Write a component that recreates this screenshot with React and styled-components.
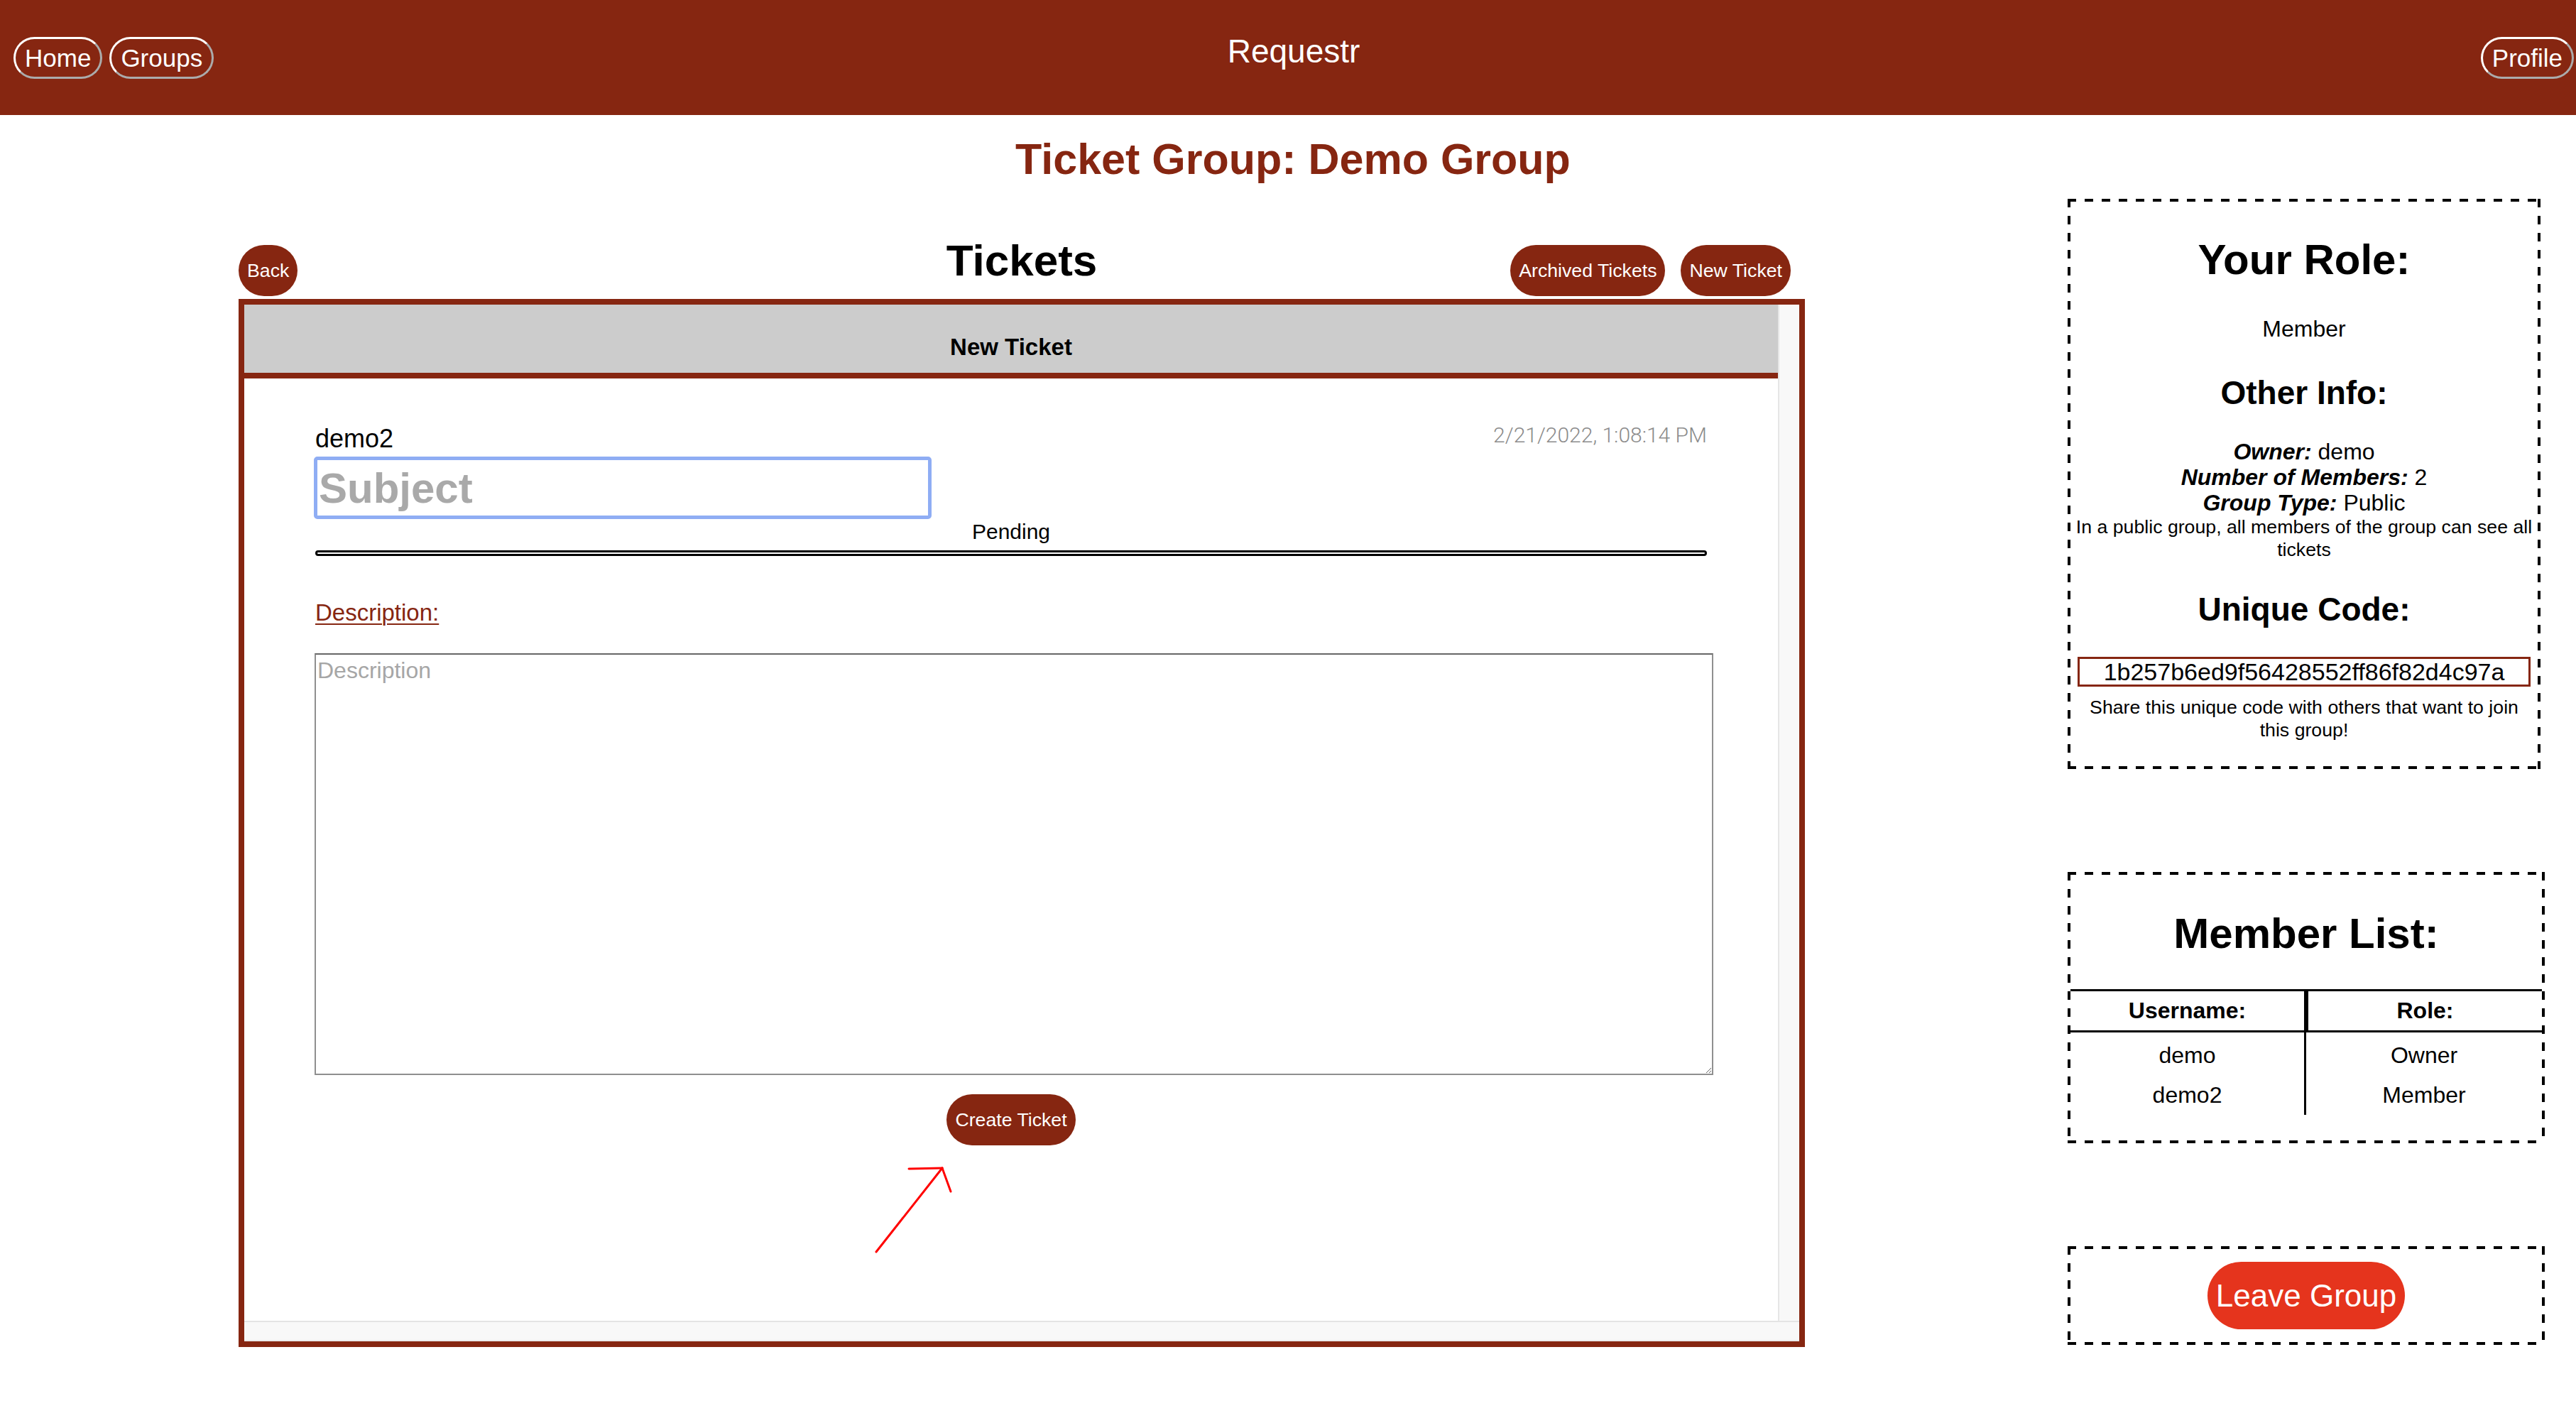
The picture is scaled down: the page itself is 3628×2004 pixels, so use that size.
import React from 'react';
import styled, { createGlobalStyle } from 'styled-components';

const BRAND = '#862611';
const SANS = '"Liberation Sans", Arial, Helvetica, sans-serif';

const GlobalStyle = createGlobalStyle`
  html, body {
    margin: 0;
    padding: 0;
    background: #fff;
  }
  body {
    font-family: ${SANS};
    color: #000;
  }
  * {
    box-sizing: border-box;
  }
`;

const Page = styled.div`
  position: relative;
  width: 3628px;
  height: 2004px;
  overflow: hidden;
`;

/* top bar */
const TopBar = styled.header`
  display: grid;
  grid-template-columns: 1fr auto 1fr;
  align-items: start;
  height: 162px;
  padding: 46px 3px 0 19px;
  background: ${BRAND};
`;

const NavGroup = styled.nav`
  display: flex;
  gap: 10px;
  margin-top: 6px;
  justify-self: ${(p) => (p.$end ? 'end' : 'start')};
`;

const NavButton = styled.button`
  height: 59px;
  padding: 0 13px;
  border: 3px outset #fff;
  border-radius: 30px;
  background: transparent;
  color: #fff;
  font-family: ${SANS};
  font-size: 35px;
  line-height: 1;
`;

const Brand = styled.div`
  color: #fff;
  font-size: 46px;
  line-height: 53px;
`;

const PageTitle = styled.h1`
  margin: 27px 0 20px;
  padding-left: 14px;
  text-align: center;
  color: ${BRAND};
  font-size: 61px;
  font-weight: 700;
  line-height: 71px;
`;

/* main area */
const Workspace = styled.main`
  display: flex;
  align-items: flex-start;
  padding-left: 336px;
`;

const TicketColumn = styled.section`
  width: 2206px;
  padding-top: 51px;
`;

const TicketsBar = styled.div`
  display: grid;
  grid-template-columns: 1fr auto 1fr;
  align-items: end;
  margin-bottom: 4px;
`;

const TicketsHeading = styled.h2`
  margin: 0 0 15px;
  font-size: 62px;
  font-weight: 700;
  line-height: 71px;
`;

const ActionGroup = styled.div`
  display: flex;
  gap: 22px;
  justify-self: ${(p) => (p.$end ? 'end' : 'start')};
  margin-right: ${(p) => (p.$end ? '20px' : '0')};
`;

const PillButton = styled.button`
  height: ${(p) => p.$h || 72}px;
  padding: 0 12px;
  border: none;
  border-radius: ${(p) => (p.$h || 72) / 2}px;
  background: ${(p) => p.$bg || BRAND};
  color: #fff;
  font-family: ${SANS};
  font-size: ${(p) => p.$size || 26.7}px;
  white-space: nowrap;
`;

// the ticket panel keeps its (empty) scrollbar tracks on the right and bottom
const Panel = styled.div`
  height: 1476px;
  display: grid;
  grid-template-columns: 1fr 30px;
  grid-template-rows: 1fr 29px;
  border: 8px solid ${BRAND};
  background: #fff;
`;

const Viewport = styled.div`
  overflow: hidden;
`;

const Track = styled.div`
  background: #f8f8f8;
  ${(p) =>
    p.$horizontal
      ? `grid-column: 1 / 3;
         border-top: 2px solid #e4e4e4;
         border-bottom: 2px solid #ebebeb;`
      : `border-left: 2px solid #e6e6e6;`}
`;

const FormHeader = styled.div`
  height: 104px;
  display: flex;
  align-items: flex-end;
  justify-content: center;
  padding-bottom: 17px;
  background: #ccc;
  border-bottom: 8px solid ${BRAND};
  font-size: 33px;
  font-weight: 700;
`;

const FormBody = styled.div`
  display: flex;
  flex-direction: column;
  padding: 64px 100px 0;
`;

const MetaRow = styled.div`
  display: flex;
  justify-content: space-between;
  align-items: flex-start;
`;

const Author = styled.span`
  font-size: 36px;
  line-height: 41px;
`;

const Timestamp = styled.span`
  margin-top: -2px;
  color: #8c8c8c;
  font-family: Roboto, ${SANS};
  font-weight: 300;
  font-size: 30px;
`;

const SubjectInput = styled.input`
  width: 870px;
  height: 88px;
  margin: 5px 0 0 -2px;
  padding: 0 2px;
  border: 5px solid #8fadf4;
  border-radius: 5px;
  outline: none;
  font-family: ${SANS};
  font-size: 60px;
  font-weight: 700;
  color: #000;

  &::placeholder {
    color: #a9a9a9;
  }
`;

const Status = styled.div`
  text-align: center;
  font-size: 30px;
  line-height: 35px;
`;

const Rule = styled.div`
  height: 8px;
  margin-top: 9px;
  border: 3px solid #000;
  border-radius: 4px;
`;

const FieldLabel = styled.label`
  align-self: flex-start;
  margin-top: 61px;
  color: ${BRAND};
  font-size: 33px;
  line-height: 38px;
  text-decoration: underline;
  text-decoration-thickness: 2px;
  text-underline-offset: 4px;
`;

const DescriptionBox = styled.textarea`
  width: calc(100% + 10px);
  height: 594px;
  margin: 38px 0 0 -1px;
  padding: 3px 2px;
  border: 2px solid #8f8f8f;
  border-top-color: #666;
  border-radius: 0;
  outline: none;
  font-family: ${SANS};
  font-size: 32px;
  line-height: 38px;

  &::placeholder {
    color: #a6a6a6;
  }
`;

const SubmitRow = styled.div`
  display: flex;
  justify-content: center;
  margin-top: 27px;
`;

/* sidebar */
const Sidebar = styled.aside`
  display: flex;
  flex-direction: column;
  align-items: flex-start;
  gap: 145px;
  margin-left: 370px;
`;

// 4px dashed frame with 12px dashes / 12px gaps
const InfoCard = styled.div`
  width: ${(p) => p.$w || 672}px;
  padding: ${(p) => p.$pad || '4px'};
  text-align: center;
  background:
    linear-gradient(to right, #000 50%, transparent 50%) left top / 24px 4px repeat-x,
    linear-gradient(to right, #000 50%, transparent 50%) left bottom / 24px 4px repeat-x,
    linear-gradient(to bottom, #000 50%, transparent 50%) left top / 4px 24px repeat-y,
    linear-gradient(to bottom, #000 50%, transparent 50%) right top / 4px 24px repeat-y;
`;

const CardHeading = styled.h2`
  margin: ${(p) => p.$m || '47px 0 0'};
  font-size: 60px;
  font-weight: 700;
  line-height: 69px;
`;

const CardSubheading = styled.h3`
  margin: ${(p) => p.$m || '45px 0 0'};
  font-size: 46px;
  font-weight: 700;
  line-height: 53px;
`;

const RoleText = styled.p`
  margin: 45px 0 0;
  font-size: 32px;
  line-height: 37px;
`;

const DetailList = styled.div`
  margin-top: 38px;
  font-size: 32px;
  line-height: 36px;
`;

const DetailKey = styled.b`
  font-style: italic;
  font-weight: 700;
`;

const Note = styled.p`
  margin: ${(p) => p.$m || '0'};
  padding: 0 ${(p) => p.$px || 0}px;
  font-size: 26.7px;
  line-height: 32px;
`;

const CodeBox = styled.div`
  margin: 40px 10px 0;
  border: 3px solid ${BRAND};
  font-size: 34px;
  line-height: 36px;
`;

const MemberTable = styled.div`
  margin-top: 44px;
`;

const TableHead = styled.div`
  display: grid;
  grid-template-columns: 1fr 1fr;
  border-top: 3px solid #000;
  border-bottom: 3px solid #000;
`;

const HeadCell = styled.div`
  height: 55px;
  display: flex;
  align-items: center;
  justify-content: center;
  font-size: 32px;
  font-weight: 700;
  border-right: ${(p) => (p.$first ? '3px solid #000' : 'none')};
  border-left: ${(p) => (p.$first ? 'none' : '3px solid #000')};
`;

const TableBody = styled.div`
  display: grid;
  grid-template-columns: 1fr 1fr;
`;

const TableColumn = styled.div`
  padding-top: 4px;
  border-right: ${(p) => (p.$first ? '3px solid #000' : 'none')};
`;

const BodyCell = styled.div`
  height: 56px;
  display: flex;
  align-items: center;
  justify-content: center;
  font-size: 32px;
`;

const Annotation = styled.svg`
  position: absolute;
  left: 1220px;
  top: 1630px;
  pointer-events: none;
`;

const members = [
  { name: 'demo', role: 'Owner' },
  { name: 'demo2', role: 'Member' },
];

export default function App() {
  return (
    <Page>
      <GlobalStyle />
      <TopBar>
        <NavGroup>
          <NavButton>Home</NavButton>
          <NavButton>Groups</NavButton>
        </NavGroup>
        <Brand>Requestr</Brand>
        <NavGroup $end>
          <NavButton>Profile</NavButton>
        </NavGroup>
      </TopBar>

      <PageTitle>Ticket Group: Demo Group</PageTitle>

      <Workspace>
        <TicketColumn>
          <TicketsBar>
            <ActionGroup>
              <PillButton>Back</PillButton>
            </ActionGroup>
            <TicketsHeading>Tickets</TicketsHeading>
            <ActionGroup $end>
              <PillButton>Archived Tickets</PillButton>
              <PillButton>New Ticket</PillButton>
            </ActionGroup>
          </TicketsBar>

          <Panel>
            <Viewport>
              <FormHeader>New Ticket</FormHeader>
              <FormBody>
                <MetaRow>
                  <Author>demo2</Author>
                  <Timestamp>2/21/2022, 1:08:14 PM</Timestamp>
                </MetaRow>
                <SubjectInput placeholder="Subject" />
                <Status>Pending</Status>
                <Rule />
                <FieldLabel htmlFor="description">Description:</FieldLabel>
                <DescriptionBox id="description" placeholder="Description" />
                <SubmitRow>
                  <PillButton>Create Ticket</PillButton>
                </SubmitRow>
              </FormBody>
            </Viewport>
            <Track />
            <Track $horizontal />
          </Panel>
        </TicketColumn>

        <Sidebar>
          <InfoCard $w={666} $pad="4px 4px 39px">
            <CardHeading>Your Role:</CardHeading>
            <RoleText>Member</RoleText>
            <CardSubheading>Other Info:</CardSubheading>
            <DetailList>
              <div><DetailKey>Owner:</DetailKey> demo</div>
              <div><DetailKey>Number of Members:</DetailKey> 2</div>
              <div><DetailKey>Group Type:</DetailKey> Public</div>
            </DetailList>
            <Note>In a public group, all members of the group can see all tickets</Note>
            <CardSubheading $m="42px 0 0">Unique Code:</CardSubheading>
            <CodeBox>1b257b6ed9f56428552ff86f82d4c97a</CodeBox>
            <Note $m="13px 0 0" $px={8}>Share this unique code with others that want to join this group!</Note>
          </InfoCard>

          <InfoCard $pad="4px 4px 40px">
            <CardHeading $m="48px 0 0">Member List:</CardHeading>
            <MemberTable>
              <TableHead>
                <HeadCell $first>Username:</HeadCell>
                <HeadCell>Role:</HeadCell>
              </TableHead>
              <TableBody>
                <TableColumn $first>
                  {members.map((m) => (
                    <BodyCell key={m.name}>{m.name}</BodyCell>
                  ))}
                </TableColumn>
                <TableColumn>
                  {members.map((m) => (
                    <BodyCell key={m.name}>{m.role}</BodyCell>
                  ))}
                </TableColumn>
              </TableBody>
            </MemberTable>
          </InfoCard>

          <InfoCard $pad="22px 4px">
            <PillButton $h={95} $size={44} $bg="#e5341d">Leave Group</PillButton>
          </InfoCard>
        </Sidebar>
      </Workspace>

      <Annotation width="130" height="140" viewBox="0 0 130 140">
        <g stroke="#ff0000" strokeWidth="3" strokeLinecap="round" fill="none">
          <line x1="14" y1="133" x2="107" y2="15" />
          <line x1="60" y1="16" x2="107" y2="15" />
          <line x1="107" y1="15" x2="119" y2="48" />
        </g>
      </Annotation>
    </Page>
  );
}
